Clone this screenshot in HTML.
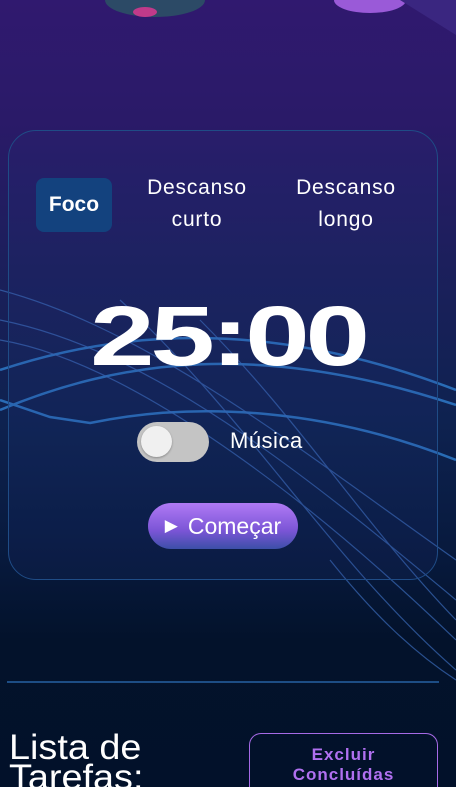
<!DOCTYPE html>
<html style="background:#02112a"><head><meta charset="utf-8"><style>
*{margin:0;padding:0;box-sizing:border-box}
html,body{width:456px;height:787px;overflow:hidden}
body{font-family:"Liberation Sans",sans-serif;
background:linear-gradient(180deg,#30196f 0px,#2a1a68 120px,#1c1f5c 260px,#0e2250 420px,#07193c 560px,#03122b 640px,#02112a 787px);position:relative}
.abs{position:absolute}
.card{left:8px;top:130px;width:430px;height:450px;border:1.5px solid #1f4c86;border-radius:28px;background:rgba(40,60,140,0.12)}
.tab{color:#fff;font-size:21px;text-align:center;line-height:32px;letter-spacing:.8px}
.foco{left:36px;top:178px;width:76px;height:54px;background:#13427e;border-radius:8px;color:#fff;font-weight:bold;font-size:21px;display:flex;align-items:center;justify-content:center}
.timer{left:0;width:456px;top:286px;text-align:center;color:#fff;font-weight:bold;font-size:84px;line-height:100px;transform:scaleX(1.38);letter-spacing:-3px}
.tog{left:137px;top:422px;width:72px;height:40px;border-radius:20px;background:#c4c4c4}
.knob{left:4px;top:4px;width:31px;height:31px;border-radius:50%;background:#f0f0f0;box-shadow:0 1px 2px rgba(0,0,0,.3)}
.btn{left:148px;top:503px;width:150px;height:46px;border-radius:23px;background:linear-gradient(180deg,#b07af5,#7b55d6 60%,#3c4fa8);color:#fff;font-size:23px;display:flex;align-items:center;justify-content:center}
.hr{left:7px;top:681px;width:432px;height:2px;background:#1d4d85}
.title{left:9px;top:733px;color:#fff;font-size:35px;line-height:30px;transform:scaleX(1.08);transform-origin:left}
.exc{left:249px;top:733px;width:189px;height:60px;border:1.5px solid #a66ae6;border-bottom:none;border-radius:12px 12px 0 0;color:#b070f0;font-weight:bold;font-size:17px;text-align:center;padding-top:11px;line-height:20px;letter-spacing:1px}
</style></head><body>
<svg class="abs" style="left:0;top:0" width="456" height="787">
<ellipse cx="155" cy="0" rx="50" ry="17" fill="#2c4a66"/>
<ellipse cx="145" cy="12" rx="12" ry="5" fill="#c03a8a"/>
<ellipse cx="370" cy="0" rx="36" ry="13" fill="#9a5ad8"/>
<polygon points="400,0 456,0 456,35" fill="#3a2680"/>
<g fill="none" stroke="#2e7ac8" stroke-width="2.5" opacity=".85">
<path d="M0 410 C120 360 260 340 456 405"/>
<path d="M0 370 C150 320 300 330 456 390"/>
<path d="M0 400 L50 417 L90 423 C200 400 330 410 456 460"/>
</g>
<g fill="none" stroke="#3a6ab8" stroke-width="1.2" opacity=".7">
<path d="M0 290 C150 330 300 450 456 560"/>
<path d="M0 320 C150 350 300 470 456 600"/>
<path d="M0 340 C120 360 290 480 456 640"/>
<path d="M120 300 C250 420 330 560 456 670"/>
<path d="M200 320 C300 420 360 520 456 620"/>
<path d="M330 560 C370 610 410 650 456 680"/>
</g>
</svg>
<div class="abs card"></div>
<div class="abs foco">Foco</div>
<div class="abs tab" style="left:132px;top:172px;width:130px">Descanso<br>curto</div>
<div class="abs tab" style="left:281px;top:172px;width:130px">Descanso<br>longo</div>
<div class="abs timer">25:00</div>
<div class="abs tog"><div class="abs knob"></div></div>
<div class="abs" style="left:230px;top:428px;color:#fff;font-size:22px;letter-spacing:.5px">Música</div>
<div class="abs btn"><span style="font-size:17px;margin-right:10px">&#9654;</span>Começar</div>
<div class="abs hr"></div>
<div class="abs title">Lista de<br>Tarefas:</div>
<div class="abs exc">Excluir<br>Concluídas</div>
</body></html>
